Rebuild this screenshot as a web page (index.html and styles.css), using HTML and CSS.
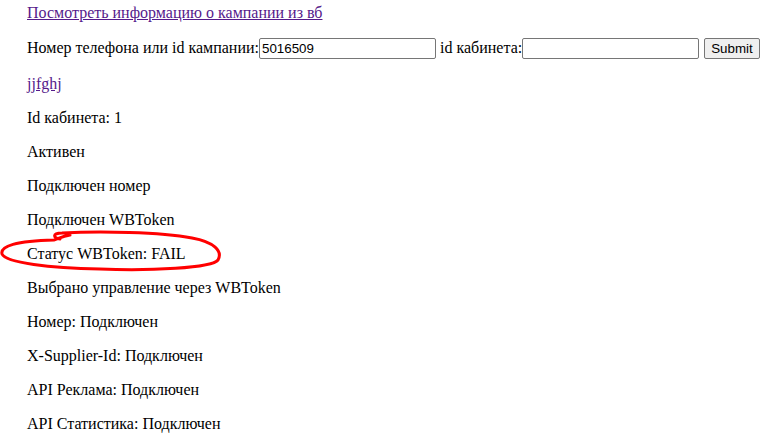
FILE: index.html
```html
<!DOCTYPE html>
<html>
<head>
<meta charset="utf-8">
<link rel="stylesheet" href="styles.css">
</head>
<body>
<div class="page">
  <a class="link" href="#">Посмотреть информацию о кампании из вб</a>
  <form class="search">
    <label>Номер телефона или id кампании:</label><input class="field" type="text" value="5016509"> <label>id кабинета:</label><input class="field" type="text"> <input class="btn" type="submit" value="Submit">
  </form>
  <a class="link" href="#">jjfghj</a>
  <p>Id кабинета: 1</p>
  <p>Активен</p>
  <p>Подключен номер</p>
  <p>Подключен WBToken</p>
  <p>Статус WBToken: FAIL</p>
  <p>Выбрано управление через WBToken</p>
  <p>Номер: Подключен</p>
  <p>X-Supplier-Id: Подключен</p>
  <p>API Реклама: Подключен</p>
  <p>API Статистика: Подключен</p>
</div>
<svg class="mark" width="778" height="439" viewBox="0 0 778 439">
  <path d="M 60 239 C 53 238, 52 233, 62 233 C 100 231, 160 232, 192 238 C 214 242, 223 251, 218 260 C 212 268, 150 271, 100 269 C 50 268, 6 263, 2 254 C 0 246, 16 241, 54 240 C 58 239, 62 236, 70 235" fill="none" stroke="#f00" stroke-width="3" stroke-linecap="round" stroke-linejoin="round"/>
</svg>
</body>
</html>
```
FILE: styles.css
```css
html, body {
  margin: 0;
  padding: 0;
  background: #fff;
}
body {
  font-family: "Liberation Serif", "Times New Roman", serif;
  font-size: 16px;
  color: #000;
}
.page {
  padding: 4px 27px 0;
}
.link {
  color: #551a8b;
  text-decoration: underline;
}
.search {
  margin: 16px 0;
  white-space: nowrap;
}
.field {
  box-sizing: border-box;
  width: 177px;
  height: 21px;
  padding: 1px 2px;
  border: 1px solid #767676;
  border-radius: 2px;
  font-family: Arial, "Liberation Sans", sans-serif;
  font-size: 13.333px;
  margin: 0;
}
.btn {
  box-sizing: border-box;
  height: 21px;
  padding: 1px 6px;
  margin: 0 0 0 1px;
  border: 1px solid #767676;
  border-radius: 2px;
  background: #efefef;
  font-family: Arial, "Liberation Sans", sans-serif;
  font-size: 13.333px;
}
p {
  margin: 16px 0;
}
.mark {
  position: absolute;
  left: 0;
  top: 0;
  pointer-events: none;
}
```
